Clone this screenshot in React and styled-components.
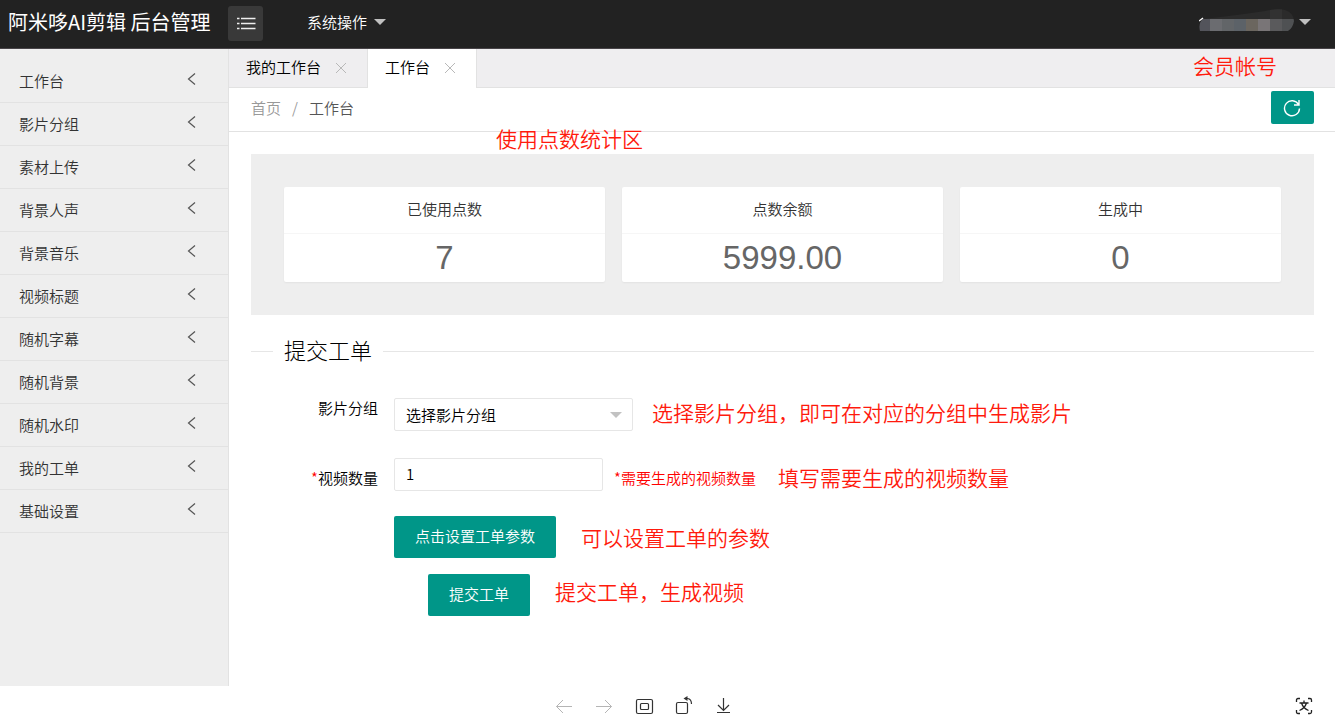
import React from "react";
import styled, { createGlobalStyle } from "styled-components";

const GlobalStyle = createGlobalStyle`
  * {
    box-sizing: border-box;
  }
  body {
    margin: 0;
    background: #fff;
    color: #000;
    font-family: "Noto Sans CJK SC", "Liberation Sans", sans-serif;
    font-size: 15px;
    font-weight: 350;
    line-height: 20px;
  }
  button, input, select {
    font: inherit;
    color: inherit;
  }
  a {
    color: inherit;
    text-decoration: none;
  }
`

const Page = styled.div`
  display: flex;
  flex-direction: column;
  min-height: 100vh;
`

const Header = styled.header`
  display: flex;
  align-items: center;
  height: 49px;
  padding-bottom: 2px;
  background: #222;
  border-bottom: 1px solid #484448;
  color: #fff;
`
const Logo = styled.h1`
  width: 228px;
  margin: 0;
  padding: 0 0 2px 8px;
  font-size: 20px;
  font-weight: 400;
  line-height: 32px;
  white-space: nowrap;
`
const MenuButton = styled.button`
  display: flex;
  align-items: center;
  justify-content: center;
  width: 35px;
  height: 35px;
  padding: 0;
  border: 0;
  border-radius: 3px;
  background: #393939;
`
const HeaderLink = styled.a`
  display: flex;
  align-items: center;
  gap: 7px;
  padding-bottom: 2px;
`
const SystemLink = styled(HeaderLink)`
  margin-left: 44px;
`
const UserLink = styled(HeaderLink)`
  gap: 5px;
  margin-left: auto;
  margin-right: 24px;
`

const Body = styled.div`
  display: flex;
  flex: 1;
`
const Side = styled.nav`
  width: 229px;
  padding-top: 11px;
  background: #eee;
  border-right: 1px solid #e2e2e2;
  color: #333;
`
const SideItem = styled.a`
  display: flex;
  align-items: center;
  justify-content: space-between;
  height: 43px;
  padding: 0 32px 0 19px;
  border-bottom: 1px solid #e2e2e2;
`
const SideArrow = styled.svg`
  margin-bottom: 5px;
`
const Main = styled.main`
  flex: 1;
  min-width: 0;
`

const Tabs = styled.div`
  position: relative;
  display: flex;
  height: 39px;
  background: #efeef0;
  border-bottom: 1px solid #e2e2e2;
`
const Tab = styled.div`
  display: flex;
  align-items: center;
  gap: 15px;
  height: ${props => props.$active ? "39px" : "38px"};
  padding: 0 21px ${props => props.$active ? "3px" : "2px"} 17px;
  border-right: 1px solid #e2e2e2;
  background: ${props => props.$active ? "#fff" : "transparent"};
`
const CloseButton = styled.button`
  display: flex;
  padding: 2px 0 0;
  border: 0;
  background: none;
`

const Crumbs = styled.div`
  display: flex;
  align-items: center;
  justify-content: space-between;
  height: 44px;
  padding: 0 21px 4px 22px;
  border-bottom: 1px solid #e2e2e2;
`
const CrumbList = styled.div`
  display: flex;
  gap: 11px;
  color: #999;
`
const CrumbCurrent = styled.span`
  color: #555;
`
const RefreshButton = styled.button`
  display: flex;
  align-items: center;
  justify-content: center;
  width: 43px;
  height: 33px;
  padding: 0 2px 0 0;
  border: 0;
  border-radius: 2px;
  background: #009688;
`

const Content = styled.div`
  position: relative;
  padding: 22px 21px 22px 22px;
`
const Note = styled.span`
  color: #ff1a0d;
  font-size: 21px;
  line-height: 28px;
  white-space: nowrap;
`
const AccountNote = styled(Note)`
  position: absolute;
  top: 2px;
  right: 58px;
`
const StatsNote = styled(Note)`
  position: absolute;
  top: -8px;
  left: 267px;
`

const Stats = styled.section`
  display: flex;
  gap: 17px;
  padding: 33px;
  background: #eee;
`
const Card = styled.div`
  flex: 1;
  border-radius: 2px;
  background: #fff;
  box-shadow: 0 1px 2px rgba(0, 0, 0, 0.05);
  text-align: center;
`
const CardTitle = styled.div`
  padding: 12px 12px 14px;
  border-bottom: 1px solid #f6f6f6;
  color: #333;
`
const CardValue = styled.div`
  color: #666;
  font-family: "Liberation Sans", sans-serif;
  font-size: 33px;
  font-weight: 400;
  line-height: 48px;
`

const Legend = styled.h2`
  display: flex;
  align-items: center;
  gap: 11px;
  margin: 20px 0 31px;
  font-size: 22px;
  font-weight: 300;
  line-height: 28px;
  &::before, &::after {
    content: "";
    width: 22px;
    height: 1px;
    background: #e6e6e6;
  }
  &::after {
    flex: 1;
  }
`
const LegendText = styled.span`
  padding-bottom: 4px;
`
const FormRow = styled.div`
  display: flex;
  align-items: flex-start;
  margin-bottom: ${props => props.$gap}px;
  padding-left: ${props => props.$indent || 0}px;
`
const Label = styled.label`
  width: 127px;
  margin-right: 16px;
  padding-top: ${props => props.$top || 0}px;
  text-align: right;
`
const Red = styled.span`
  color: #f00;
`
const SelectBox = styled.div`
  position: relative;
  width: 239px;
  margin-right: 19px;
`
const SelectArrow = styled.svg`
  position: absolute;
  top: 14px;
  right: 11px;
  pointer-events: none;
`
const Select = styled.select`
  display: block;
  width: 100%;
  height: 33px;
  padding: 0 11px;
  border: 1px solid #e6e6e6;
  border-radius: 2px;
  background: #fff;
  appearance: none;
`
const Input = styled.input`
  width: 209px;
  height: 33px;
  padding: 0 11px 2px;
  border: 1px solid #e6e6e6;
  border-radius: 2px;
`
const Hint = styled(Red)`
  margin: 10px 22px 0 11px;
`
const Button = styled.button`
  height: 42px;
  margin-right: 25px;
  padding: 0 21px 2px;
  border: 0;
  border-radius: 2px;
  background: #009688;
  color: #fff;
`
const RowNote = styled(Note)`
  padding-top: ${props => props.$top || 0}px;
`

const Footer = styled.footer`
  display: grid;
  grid-template-columns: 1fr auto 1fr;
  align-items: center;
  height: 36px;
  padding: 4px 22px 0;
`
const Tools = styled.div`
  grid-column: 2;
  display: flex;
  gap: 20px;
  margin-right: 48px;
`
const ToolButton = styled.button`
  display: flex;
  padding: 0;
  border: 0;
  background: none;
`
const TranslateButton = styled(ToolButton)`
  justify-self: end;
`

const menus = ["工作台", "影片分组", "素材上传", "背景人声", "背景音乐", "视频标题", "随机字幕", "随机背景", "随机水印", "我的工单", "基础设置"];

const stats = [
  { title: "已使用点数", value: "7" },
  { title: "点数余额", value: "5999.00" },
  { title: "生成中", value: "0" },
];

const mosaic = ["#53545b", "#6b6c70", "#626568", "#5c6268", "#6b665f", "#797577", "#5a5a5c", "#4f5153"];

function Caret({ color }) {
  return (
    <svg width="12" height="6" viewBox="0 0 12 6"><path d="M0 0H12L6 6Z" fill={color} /></svg>
  )
}

function UserName() {
  return (
    <svg width="95" height="26" viewBox="0 0 95 26">
      <clipPath id="user"><path d="M4 10Q40 6 66 2Q80 -1 86 1Q95 4 95 12Q94 19 89 22H1Q-1 14 4 10Z" /></clipPath>
      <g clipPath="url(#user)">
        <rect width="95" height="10" fill="#2b2b2b" />
        <rect x="71" width="12" height="10" fill="#323232" />
        {mosaic.map((color, i) => (
          <rect key={i} x={i * 12 - 1} y="10" width="12" height="12" fill={color} />
        ))}
      </g>
      <path d="M0 12L4 9" stroke="#fff" strokeWidth="1.4" />
    </svg>
  )
}

function TabItem({ title, active }) {
  return (
    <Tab $active={active}>
      <a href="#">{title}</a>
      <CloseButton aria-label="关闭">
        <svg width="10" height="10" viewBox="0 0 10 10"><path d="M0 0L10 10M10 0L0 10" stroke="#b8b8b8" /></svg>
      </CloseButton>
    </Tab>
  )
}

function WorkForm() {
  return (
    <form onSubmit={(e) => e.preventDefault()}>
      <FormRow $gap={27}>
        <Label htmlFor="group">影片分组</Label>
        <SelectBox>
          <Select id="group">
            <option>选择影片分组</option>
          </Select>
          <SelectArrow width="12" height="6" viewBox="0 0 12 6"><path d="M0 0H12L6 6Z" fill="#c2c2c2" /></SelectArrow>
        </SelectBox>
        <RowNote>选择影片分组，即可在对应的分组中生成影片</RowNote>
      </FormRow>
      <FormRow $gap={25}>
        <Label htmlFor="count" $top={10}><Red>*</Red>视频数量</Label>
        <Input id="count" type="text" defaultValue="1" />
        <Hint>*需要生成的视频数量</Hint>
        <RowNote $top={5}>填写需要生成的视频数量</RowNote>
      </FormRow>
      <FormRow $gap={16} $indent={143}>
        <Button type="button">点击设置工单参数</Button>
        <RowNote $top={7}>可以设置工单的参数</RowNote>
      </FormRow>
      <FormRow $gap={0} $indent={177}>
        <Button type="submit">提交工单</Button>
        <RowNote $top={3}>提交工单，生成视频</RowNote>
      </FormRow>
    </form>
  )
}

function BottomBar() {
  return (
    <Footer>
      <Tools>
        <ToolButton aria-label="后退">
          <svg width="20" height="20" viewBox="0 0 20 20" fill="none" stroke="#b5b5b5"><path d="M18 10.5H2.5M9 4L2.5 10.5L9 17" /></svg>
        </ToolButton>
        <ToolButton aria-label="前进">
          <svg width="20" height="20" viewBox="0 0 20 20" fill="none" stroke="#b5b5b5"><path d="M2 10.5H17.5M11 4L17.5 10.5L11 17" /></svg>
        </ToolButton>
        <ToolButton aria-label="全屏">
          <svg width="20" height="20" viewBox="0 0 20 20" fill="none" stroke="#333" strokeWidth="1.2"><rect x="2.5" y="3.5" width="16" height="14" rx="1.5" /><rect x="6.5" y="7.5" width="8" height="6" rx="1" /></svg>
        </ToolButton>
        <ToolButton aria-label="旋转">
          <svg width="20" height="20" viewBox="0 0 20 20" fill="none" stroke="#333" strokeWidth="1.2"><rect x="2.5" y="6.5" width="11" height="11" rx="1.5" /><path d="M12 2.5H13.5Q17.5 3 17.5 8" /><path d="M9.5 2.5L13.5 0V5Z" fill="#333" stroke="none" /></svg>
        </ToolButton>
        <ToolButton aria-label="下载">
          <svg width="20" height="20" viewBox="0 0 20 20" fill="none" stroke="#333" strokeWidth="1.2"><path d="M9.5 2V14M4 9L9.5 14.5L15 9M3 16.5H16" /></svg>
        </ToolButton>
      </Tools>
      <TranslateButton aria-label="翻译">
        <svg width="18" height="18" viewBox="0 0 18 18" fill="none" stroke="#222" strokeWidth="1.3">
          <path d="M5 1.5H3Q1.5 1.5 1.5 3V5M13 1.5H15Q16.5 1.5 16.5 3V5M5 16.5H3Q1.5 16.5 1.5 15V13M13 16.5H15Q16.5 16.5 16.5 15V13" />
          <path d="M9 3.5V6M4.5 6H13.5M11.5 6Q10 11 4.5 13.5M6.5 6Q8 11 13.5 13.5" />
        </svg>
      </TranslateButton>
    </Footer>
  )
}

function App() {
  return (
    <Page>
      <GlobalStyle />
      <Header>
        <Logo>阿米哆AI剪辑 后台管理</Logo>
        <MenuButton aria-label="菜单">
          <svg width="20" height="14" viewBox="0 0 20 14" stroke="#eee" strokeWidth="1.3"><path d="M1 2.5H3.5M5 2.5H19.500M1 7.5H3.5M5 7.5H19.500M1 12.5H3.5M5 12.5H19.500" /></svg>
        </MenuButton>
        <SystemLink href="#">系统操作<Caret color="#c0c0c0" /></SystemLink>
        <UserLink href="#" aria-label="会员帐号"><UserName /><Caret color="#c0c0c0" /></UserLink>
      </Header>
      <Body>
        <Side>
          {menus.map((name) => (
            <SideItem href="#" key={name}>
              {name}
              <SideArrow width="9" height="12" viewBox="0 0 9 12"><path d="M8 0.5L1.5 6L8 11.5" fill="none" stroke="#555" strokeWidth="1.2" /></SideArrow>
            </SideItem>
          ))}
        </Side>
        <Main>
          <Tabs>
            <TabItem title="我的工作台" />
            <TabItem title="工作台" active />
            <AccountNote>会员帐号</AccountNote>
          </Tabs>
          <Crumbs>
            <CrumbList>
              <a href="#">首页</a>
              <span>/</span>
              <CrumbCurrent>工作台</CrumbCurrent>
            </CrumbList>
            <RefreshButton aria-label="刷新">
              <svg width="18" height="18" viewBox="0 0 18 18" fill="none" stroke="#fff" strokeWidth="1.4"><path d="M15.5 5.5A7.5 7.5 0 1 0 16.5 9.5M16 1V6H11" /></svg>
            </RefreshButton>
          </Crumbs>
          <Content>
            <StatsNote>使用点数统计区</StatsNote>
            <Stats>
              {stats.map((item) => (
                <Card key={item.title}>
                  <CardTitle>{item.title}</CardTitle>
                  <CardValue>{item.value}</CardValue>
                </Card>
              ))}
            </Stats>
            <Legend><LegendText>提交工单</LegendText></Legend>
            <WorkForm />
          </Content>
        </Main>
      </Body>
      <BottomBar />
    </Page>
  )
}

export default App
